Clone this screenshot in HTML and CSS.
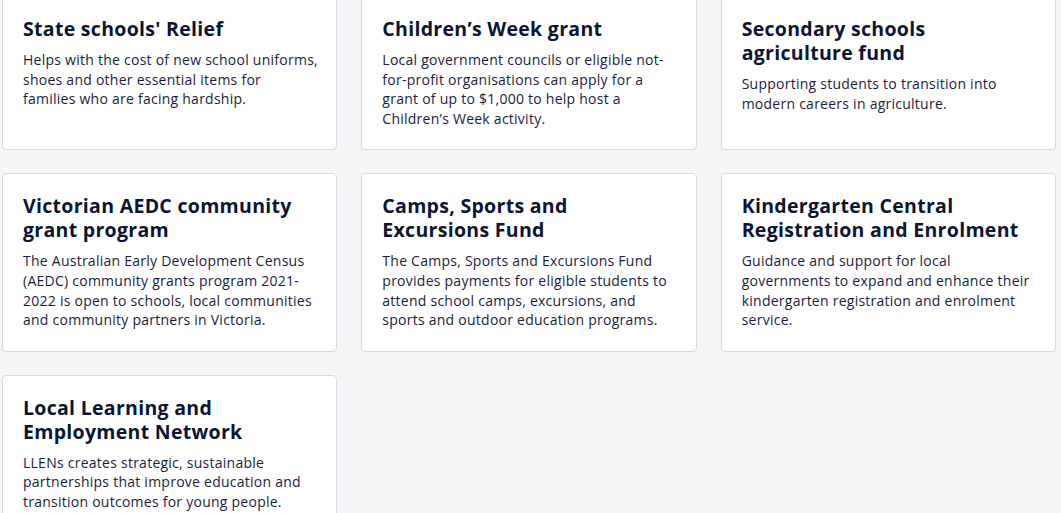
FILE: index.html
```html
<!DOCTYPE html>
<html lang="en">
<head>
<meta charset="utf-8">
<title>Programs</title>
<link rel="stylesheet" href="styles.css">
</head>
<body>
<main class="grid">
  <article class="card">
    <h3 class="card-title">State schools' Relief</h3>
    <p class="card-text">Helps with the cost of new school uniforms,<br>shoes and other essential items for<br>families who are facing hardship.</p>
  </article>
  <article class="card">
    <h3 class="card-title">Children’s Week grant</h3>
    <p class="card-text">Local government councils or eligible not-<br>for-profit organisations can apply for a<br>grant of up to $1,000 to help host a<br>Children’s Week activity.</p>
  </article>
  <article class="card">
    <h3 class="card-title">Secondary schools<br>agriculture fund</h3>
    <p class="card-text">Supporting students to transition into<br>modern careers in agriculture.</p>
  </article>
  <article class="card">
    <h3 class="card-title">Victorian AEDC community<br>grant program</h3>
    <p class="card-text">The Australian Early Development Census<br>(AEDC) community grants program 2021-<br>2022 is open to schools, local communities<br>and community partners in Victoria.</p>
  </article>
  <article class="card">
    <h3 class="card-title">Camps, Sports and<br>Excursions Fund</h3>
    <p class="card-text">The Camps, Sports and Excursions Fund<br>provides payments for eligible students to<br>attend school camps, excursions, and<br>sports and outdoor education programs.</p>
  </article>
  <article class="card">
    <h3 class="card-title">Kindergarten Central<br>Registration and Enrolment</h3>
    <p class="card-text">Guidance and support for local<br>governments to expand and enhance their<br>kindergarten registration and enrolment<br>service.</p>
  </article>
  <article class="card">
    <h3 class="card-title">Local Learning and<br>Employment Network</h3>
    <p class="card-text">LLENs creates strategic, sustainable<br>partnerships that improve education and<br>transition outcomes for young people.</p>
  </article>
</main>
</body>
</html>
```

FILE: styles.css
```css
html, body {
  margin: 0;
  padding: 0;
  background: #f5f5f7;
}

body {
  font-family: "Open Sans", "Noto Sans", sans-serif;
  color: #1a1b3f;
}

.grid {
  display: grid;
  grid-template-columns: repeat(3, 1fr);
  column-gap: 24px;
  row-gap: 23px;
  width: 1054px;
  margin: -4px 0 0 2px;
}

.card {
  background: #ffffff;
  border: 1px solid #d8d9de;
  border-radius: 4px;
  padding: 20px 20px 21px;
  min-width: 0;
}

.card-title {
  margin: 0 0 9px;
  font-size: 19.5px;
  line-height: 24px;
  font-weight: 700;
  letter-spacing: 0.3px;
  color: #0b1433;
  white-space: nowrap;
}

.card-text {
  margin: 0;
  font-size: 14px;
  line-height: 19.6px;
  letter-spacing: 0.25px;
  color: #1c1c40;
  white-space: nowrap;
}
```
